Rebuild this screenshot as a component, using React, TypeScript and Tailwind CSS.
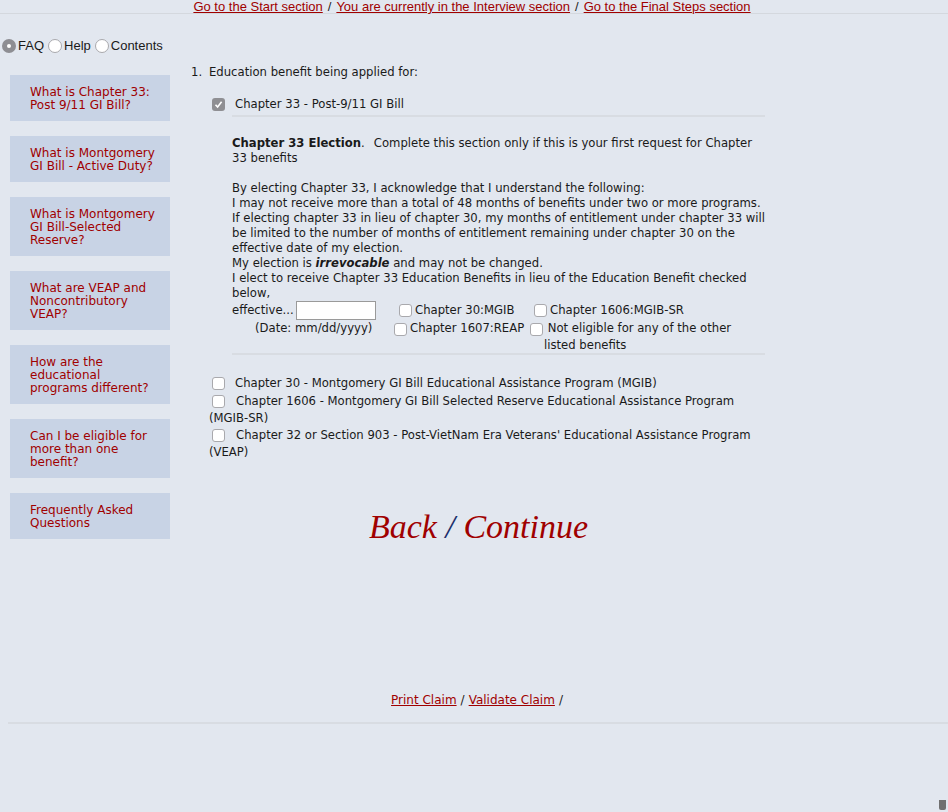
import React from "react";

const sidebarLinks = [
  ["What is Chapter 33:", "Post 9/11 GI Bill?"],
  ["What is Montgomery", "GI Bill - Active Duty?"],
  ["What is Montgomery", "GI Bill-Selected", "Reserve?"],
  ["What are VEAP and", "Noncontributory", "VEAP?"],
  ["How are the", "educational", "programs different?"],
  ["Can I be eligible for", "more than one", "benefit?"],
  ["Frequently Asked", "Questions"],
];

function Box({ checked = false }: { checked?: boolean }) {
  if (checked) {
    return (
      <span className="inline-flex h-[13px] w-[13px] shrink-0 items-center justify-center rounded-[3px] bg-[#8f8f93] align-middle">
        <svg width="9" height="9" viewBox="0 0 9 9">
          <path d="M1.5 4.8 L3.6 7 L7.6 1.8" stroke="white" strokeWidth="1.6" fill="none" />
        </svg>
      </span>
    );
  }
  return (
    <span className="inline-block h-[13px] w-[13px] shrink-0 rounded-[3px] border border-[#a9a9ad] bg-white align-middle" />
  );
}

function Radio({ on = false }: { on?: boolean }) {
  if (on) {
    return (
      <span className="inline-flex h-[14px] w-[14px] items-center justify-center rounded-full bg-[#8e8e93]">
        <span className="h-[4px] w-[4px] rounded-full bg-white" />
      </span>
    );
  }
  return <span className="inline-block h-[14px] w-[14px] rounded-full border border-[#a9a9ad] bg-white" />;
}

export default function App() {
  return (
    <div className="relative min-h-[812px] bg-[#e2e7ef] font-['DejaVu_Sans',sans-serif] text-[11.65px] leading-[15px] text-[#1a1a1a]">
      <div className="flex h-[14px] items-center justify-center border-b border-[#d4d8de] pr-[4px] font-['Liberation_Sans',sans-serif] text-[13px] text-[#222]">
        <a className="text-[#a00000] underline">Go to the Start section</a>
        <span className="mx-[5px]">/</span>
        <a className="text-[#a00000] underline">You are currently in the Interview section</a>
        <span className="mx-[5px]">/</span>
        <a className="text-[#a00000] underline">Go to the Final Steps section</a>
      </div>

      <div className="mt-[24px] flex items-center pl-[2px] font-['Liberation_Sans',sans-serif] text-[13px]">
        <Radio on />
        <span className="ml-[2px] mr-[4px]">FAQ</span>
        <Radio />
        <span className="ml-[2px] mr-[4px]">Help</span>
        <Radio />
        <span className="ml-[2px]">Contents</span>
      </div>

      <div className="flex">
        <div className="ml-[10px] mt-[22px] flex w-[160px] flex-col gap-[15px]">
          {sidebarLinks.map((lines, i) => (
            <a
              key={i}
              className="block bg-[#c8d3e5] pb-[9px] pt-[11px] pl-[20px] pr-[4px] text-[12px] leading-[13px] text-[#a00000]"
            >
              {lines.map((l, j) => (
                <div key={j}>{l}</div>
              ))}
            </a>
          ))}
        </div>

        <div className="ml-[21px] mt-[12px] w-[590px]">
          <div className="flex">
            <span className="w-[18px]">1.</span>
            <span>Education benefit being applied for:</span>
          </div>

          <div className="ml-[21px] mt-[17px]">
            <div className="flex items-center gap-[10px] pb-[3px]">
              <Box checked />
              <span>Chapter 33 - Post-9/11 GI Bill</span>
            </div>
            <div className="ml-[20px] w-[533px] border-t-2 border-[#d8dce2]" />

            <div className="ml-[20px] mt-[19px] w-[535px]">
              <p>
                <b>Chapter 33 Election</b>.<span className="ml-[9px]">Complete this section only if this is your first request for Chapter</span>
                <br />
                33 benefits
              </p>
              <p className="mt-[15px]">
                By electing Chapter 33, I acknowledge that I understand the following:
                <br />
                I may not receive more than a total of 48 months of benefits under two or more programs.
                <br />
                If electing chapter 33 in lieu of chapter 30, my months of entitlement under chapter 33 will be limited to the number of months of entitlement remaining under chapter 30 on the effective date of my election.
                <br />
                My election is <b><i>irrevocable</i></b> and may not be changed.
                <br />
                I elect to receive Chapter 33 Education Benefits in lieu of the Education Benefit checked below,
              </p>

              <div className="grid grid-cols-[162px_136px_1fr]">
                <div className="flex items-center gap-[2px]">
                  <span>effective...</span>
                  <span className="inline-block h-[19px] w-[80px] border border-[#9a9a9a] bg-white" />
                </div>
                <div className="flex items-center gap-[3px] pl-[5px]">
                  <Box />
                  <span>Chapter 30:MGIB</span>
                </div>
                <div className="flex items-center gap-[3px] pl-[4px]">
                  <Box />
                  <span>Chapter 1606:MGIB-SR</span>
                </div>
                <div className="mt-[1px] pl-[23px]">(Date: mm/dd/yyyy)</div>
                <div className="mt-[1px] flex items-start gap-[3px]">
                  <span className="mt-[1px]">
                    <Box />
                  </span>
                  <span>Chapter 1607:REAP</span>
                </div>
                <div className="mt-[1px] flex items-start gap-[1px]">
                  <span className="mt-[1px]">
                    <Box />
                  </span>
                  <span className="-mt-[1px] w-[220px] leading-[17px]">
                    &nbsp;Not eligible for any of the other
                    <br />
                    listed benefits
                  </span>
                </div>
              </div>
              <div className="-mt-[1px] w-[533px] border-t-2 border-[#d8dce2]" />
            </div>

            <div className="-ml-[3px] mt-[20px] w-[560px] leading-[17px]">
              <p className="flex items-center gap-[10px] pl-[3px]">
                <Box />
                <span>Chapter 30 - Montgomery GI Bill Educational Assistance Program (MGIB)</span>
              </p>
              <p className="mt-[1px] indent-[3px]">
                <Box /> &nbsp; Chapter 1606 - Montgomery GI Bill Selected Reserve Educational Assistance Program (MGIB-SR)
              </p>
              <p className="indent-[3px]">
                <Box /> &nbsp; Chapter 32 or Section 903 - Post-VietNam Era Veterans' Educational Assistance Program (VEAP)
              </p>
            </div>
          </div>

          <div className="mt-[46px] pl-[178px] font-['Liberation_Serif',serif] text-[34px] italic leading-[40px] text-[#a00000]">
            <a>Back</a>
            <span className="text-[#1c2f6b]"> / </span>
            <a>Continue</a>
          </div>
        </div>
      </div>

      <div className="mt-[146px] flex justify-center pl-[6px] text-[12px] text-[#222]">
        <a className="text-[#a00000] underline">Print Claim</a>
        <span className="mx-[4px]">/</span>
        <a className="text-[#a00000] underline">Validate Claim</a>
        <span className="ml-[4px]">/</span>
      </div>
      <div className="ml-[8px] mt-[14px] border-t-2 border-[#d8dce2]" />

      <div className="absolute bottom-[2px] right-[2px] h-[10px] w-[7px] rounded-b-[2px] bg-[#707070]" />
    </div>
  );
}
